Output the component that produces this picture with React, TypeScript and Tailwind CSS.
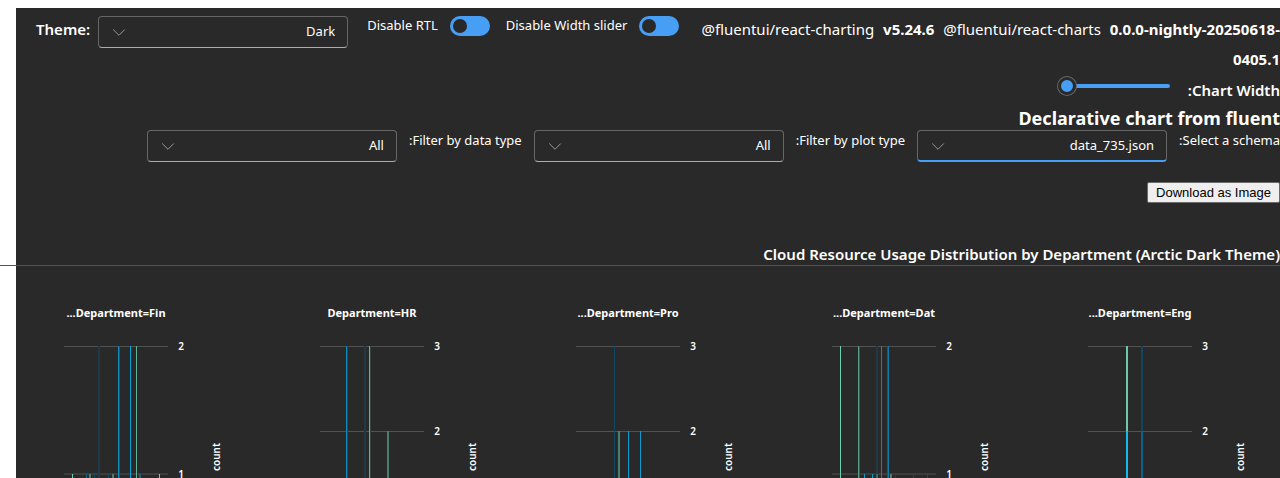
import { useState } from "react";
import type { ReactNode } from "react";

type Bar = { x: number; w: number; y: number; color: string; h?: number };
type Panel = {
  title: string;
  ticks: { y: number; label: string; soft?: boolean }[];
  bars: Bar[];
};

const BOTTOM = 213;
const TOP = 80;
const MID = 165;
const ONE = 208;

const panels: Panel[] = [
  {
    title: "Department=Fin...",
    ticks: [{ y: TOP, label: "2" }, { y: ONE, label: "1", soft: true }],
    bars: [
      { x: 98, w: 2, y: TOP, color: "#1f3947" },
      { x: 118, w: 1, y: TOP, color: "#138bb8" },
      { x: 119, w: 1, y: TOP, color: "#245467" },
      { x: 130, w: 1, y: TOP, color: "#0aa0d8" },
      { x: 136, w: 1, y: TOP, color: "#5fb396" },
      { x: 72, w: 1, y: ONE, color: "#6cd0ad" },
      { x: 86, w: 1, y: ONE, color: "#0d668c" },
      { x: 89, w: 2, y: ONE, color: "#4a7f6d" },
      { x: 94, w: 1, y: ONE, color: "#144d68" },
      { x: 108, w: 1, y: ONE, color: "#144d68" },
      { x: 112, w: 2, y: ONE, color: "#4a7f6d" },
      { x: 139, w: 2, y: ONE, color: "#245f70" },
      { x: 159, w: 1, y: ONE, color: "#6cd0ad" },
    ],
  },
  {
    title: "Department=HR",
    ticks: [{ y: TOP, label: "3" }, { y: MID, label: "2" }],
    bars: [
      { x: 90, w: 1, y: TOP, color: "#0a8dbd" },
      { x: 91, w: 1, y: TOP, color: "#28424d" },
      { x: 108, w: 2, y: TOP, color: "#1f3947" },
      { x: 113, w: 1, y: TOP, color: "#63b497" },
      { x: 114, w: 1, y: TOP, color: "#30463f" },
      { x: 131, w: 2, y: MID, color: "#4a7f6d" },
    ],
  },
  {
    title: "Department=Pro...",
    ticks: [{ y: TOP, label: "3" }, { y: MID, label: "2" }],
    bars: [
      { x: 102, w: 1, y: TOP, color: "#0b4763" },
      { x: 106, w: 2, y: MID, color: "#4a7f6d" },
      { x: 116, w: 1, y: MID, color: "#0a9bd0" },
      { x: 128, w: 1, y: MID, color: "#0a9bd0" },
    ],
  },
  {
    title: "Department=Dat...",
    ticks: [{ y: TOP, label: "2" }, { y: ONE, label: "1", soft: true }],
    bars: [
      { x: 72, w: 1, y: TOP, color: "#6cd0ad" },
      { x: 90, w: 1, y: TOP, color: "#5aa088" },
      { x: 91, w: 1, y: TOP, color: "#38574e" },
      { x: 108, w: 2, y: TOP, color: "#1f3947" },
      { x: 113, w: 1, y: TOP, color: "#0d89b6" },
      { x: 119, w: 1, y: TOP, color: "#245467" },
      { x: 120, w: 1, y: TOP, color: "#0d7ba5" },
      { x: 96, w: 1, y: ONE, color: "#0a9bd0" },
      { x: 104, w: 1, y: ONE, color: "#0a9bd0" },
      { x: 108, w: 2, y: ONE, color: "#376a67" },
      { x: 122, w: 2, y: ONE, color: "#4a7f6d" },
      { x: 127, w: 1, y: ONE, color: "#1b4252" },
      { x: 145, w: 1, y: ONE, color: "#144d68" },
      { x: 159, w: 1, y: ONE, color: "#144d68" },
    ],
  },
  {
    title: "Department=Eng...",
    ticks: [{ y: TOP, label: "3" }, { y: MID, label: "2" }],
    bars: [
      { x: 102, w: 2, y: TOP, h: 85, color: "#6bc9a8" },
      { x: 102, w: 2, y: MID, color: "#17b8ee" },
      { x: 117, w: 2, y: TOP, h: 85, color: "#114560" },
      { x: 117, w: 2, y: MID, color: "#0b628a" },
    ],
  },
];

function DepartmentChart({ panel }: { panel: Panel }) {
  return (
    <svg viewBox={`0 0 256 ${BOTTOM}`} className="block w-full" direction="ltr" role="img" aria-label={panel.title}>
      <text x="116" y="51" textAnchor="middle" direction="rtl" fill="#fff" className="text-[11px] font-bold">
        {panel.title}
      </text>
      {panel.ticks.map((t) => (
        <g key={t.label}>
          <rect x="64" y={t.y - (t.soft ? 1 : 0)} width="104" height={t.soft ? 2 : 1} fill={t.soft ? "#3c3c3c" : "#525252"} />
          <text x="181" y={t.y + 4} textAnchor="middle" fill="#fff" className="text-[10px] font-semibold">
            {t.label}
          </text>
        </g>
      ))}
      {panel.bars.map((b, i) => (
        <rect key={i} x={b.x} y={b.y} width={b.w} height={b.h ?? BOTTOM - b.y} fill={b.color} />
      ))}
      <text transform="translate(220 191) rotate(-90)" textAnchor="middle" fill="#fff" className="text-[10px] font-semibold">
        count
      </text>
    </svg>
  );
}

function Dropdown({ id, options, active = false }: { id: string; options: string[]; active?: boolean }) {
  return (
    <div className="relative w-[250px] shrink-0">
      <select
        id={id}
        dir="rtl"
        className={
          "block h-8 w-full appearance-none rounded border border-[#666] bg-[#292929] pr-3 pl-9 text-[13px] text-white outline-none " +
          (active ? "border-b-2 border-b-[#479ef5]" : "border-b-[#adadad]")
        }
      >
        {options.map((o) => (
          <option key={o}>{o}</option>
        ))}
      </select>
      <svg viewBox="0 0 20 20" className="pointer-events-none absolute top-[6px] left-[11px] size-5" fill="none" stroke="#999">
        <path d="M4.2 7.5 10 13.3 15.8 7.5" />
      </svg>
    </div>
  );
}

function Toggle({ id, children }: { id: string; children: ReactNode }) {
  const [on, setOn] = useState(true);
  return (
    <div className="flex h-5 shrink-0 items-center gap-3">
      <label htmlFor={id} className="text-[13px]">{children}</label>
      <input
        id={id}
        type="checkbox"
        role="switch"
        checked={on}
        onChange={() => setOn(!on)}
        className="flex h-5 w-10 appearance-none items-center rounded-full bg-[#479ef5] px-[3px] before:size-[14px] before:rounded-full before:bg-[#292929]"
      />
    </div>
  );
}

export default function App() {
  return (
    <div className="bg-white pt-2 pl-4 font-['Noto_Sans','Open_Sans',sans-serif] text-white">
      <main className="bg-[#292929]">
        <header className="flex items-start pt-2 pl-5">
          <label htmlFor="theme" className="mr-2 text-[15px] leading-[26px] font-semibold">Theme:</label>
          <Dropdown id="theme" options={["Dark", "Light"]} />
          <div className="ml-[19px] flex gap-4">
            <Toggle id="rtl">Disable RTL</Toggle>
            <Toggle id="slider">Disable Width slider</Toggle>
          </div>
          <p className="-mt-0.5 min-w-0 flex-1 pl-3 text-right text-[15px] leading-[30px]">
            @fluentui/react-charting <b className="mx-[5px] font-bold">v5.24.6</b> @fluentui/react-charts{" "}
            <b className="ml-[5px] font-bold">0.0.0-nightly-20250618-0405.1</b>
          </p>
        </header>

        <div dir="rtl">
          <div className="flex h-8 items-start gap-[18px]">
            <label htmlFor="width" className="text-[15px] leading-8 font-semibold">Chart Width:</label>
            <input
              id="width"
              type="range"
              defaultValue={100}
              className="mt-[10px] h-1 w-[112px] appearance-none rounded-full bg-[#479ef5] [&::-webkit-slider-thumb]:size-[18px] [&::-webkit-slider-thumb]:appearance-none [&::-webkit-slider-thumb]:rounded-full [&::-webkit-slider-thumb]:border-[3px] [&::-webkit-slider-thumb]:border-[#292929] [&::-webkit-slider-thumb]:bg-[#479ef5] [&::-webkit-slider-thumb]:shadow-[0_0_0_1px_#666]"
            />
          </div>
          <h2 className="text-[18px] leading-6 font-bold">Declarative chart from fluent</h2>
          <div className="flex items-start gap-3">
            <label htmlFor="schema" className="text-[13px] leading-5">Select a schema:</label>
            <Dropdown id="schema" options={["data_735.json"]} active />
            <label htmlFor="plot" className="text-[13px] leading-5">Filter by plot type:</label>
            <Dropdown id="plot" options={["All"]} />
            <label htmlFor="data" className="text-[13px] leading-5">Filter by data type:</label>
            <Dropdown id="data" options={["All"]} />
          </div>
          <button className="mt-5 block rounded-[2px] border border-[#6b6b6b] bg-[#efefef] px-2 font-['Liberation_Sans',sans-serif] text-[13px] leading-[19px] text-black">
            Download as Image
          </button>
          <h3 className="mt-10 text-[15px] leading-[22px] font-semibold">
            Cloud Resource Usage Distribution by Department (Arctic Dark Theme)
          </h3>
        </div>

        <section dir="ltr" className="-ml-4">
          <hr className="border-t border-[#525252]" />
          <div className="grid grid-cols-5">
            {panels.map((p) => (
              <DepartmentChart key={p.title} panel={p} />
            ))}
          </div>
        </section>
      </main>
    </div>
  );
}
